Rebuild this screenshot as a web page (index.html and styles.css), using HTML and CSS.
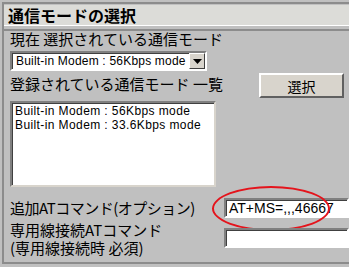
FILE: index.html
```html
<!DOCTYPE html>
<html lang="ja">
<head>
    <meta charset="UTF-8">
    <title>通信モードの選択</title>
    <link rel="stylesheet" href="styles.css">
</head>
<body>
    <div class="frame">
        <div class="title">通信モードの選択</div>
        <div class="content">
            <div class="label">現在 選択されている通信モード</div>
            <div class="select">
                <span class="select-text">Built-in Modem : 56Kbps mode</span>
                <span class="select-btn">
                    <svg width="9" height="5" viewBox="0 0 9 5"><path d="M0 0h9L4.5 5z" fill="#000"/></svg>
                </span>
            </div>
            <div class="list-head">
                <div class="label">登録されている通信モード 一覧</div>
                <button class="btn">選択</button>
            </div>
            <div class="listbox">
                <div class="item">Built-in Modem : 56Kbps mode</div>
                <div class="item">Built-in Modem : 33.6Kbps mode</div>
            </div>
            <div class="field">
                <div class="label narrow">追加ATコマンド(オプション)</div>
                <div class="input">AT+MS=,,,46667</div>
                <div class="mark"></div>
            </div>
            <div class="field field-two">
                <div class="label">
                    <div class="line">専用線接続ATコマンド</div>
                    <div class="line">(専用線接続時 必須)</div>
                </div>
                <div class="input"></div>
            </div>
        </div>
    </div>
</body>
</html>
```

FILE: styles.css
```css
body {
    margin: 0;
    background: #c0c0c0;
    font-family: "Noto Sans CJK JP", "DejaVu Sans", sans-serif;
    color: #000;
    overflow: hidden;
}

.frame {
    margin: 2px 0 0 2px;
    height: 258px;
    border-top: 2px solid #8c8c8c;
    border-left: 2px solid #8c8c8c;
    border-bottom: 2px solid #8c8c8c;
    position: relative;
}

.title {
    margin-top: 1px;
    height: 20px;
    padding-left: 4px;
    background: #dcdcd8;
    border-bottom: 1px solid #fff;
    font-size: 16px;
    font-weight: bold;
    line-height: 21px;
    box-shadow: 0 3px 0 #c0c0c0, 0 5px 0 #8c8c8c;
}

.content {
    padding: 4px 0 0 6px;
}

.label {
    font-size: 15px;
    line-height: 18px;
    white-space: nowrap;
}

.label.narrow {
    letter-spacing: -0.5px;
}

.select {
    margin-top: 3px;
    width: 193px;
    height: 16px;
    display: flex;
    align-items: center;
    background: #fff;
    border: 2px solid;
    border-color: #808080 #fff #fff #808080;
    box-shadow: inset 1px 1px 0 #404040;
}

.select-text {
    flex: 1;
    padding-left: 4px;
    font-family: "Liberation Sans", sans-serif;
    font-size: 12px;
    letter-spacing: 0.2px;
    white-space: nowrap;
}

.select-btn {
    width: 14px;
    height: 14px;
    display: flex;
    align-items: center;
    justify-content: center;
    background: #d8d4cc;
    border: 1px solid;
    border-color: #fff #404040 #404040 #fff;
}

.list-head {
    display: flex;
    justify-content: space-between;
    align-items: flex-start;
    margin-top: 2px;
}

.list-head .label {
    margin-top: 2px;
}

.btn {
    width: 85px;
    height: 25px;
    margin-right: 5px;
    background: #d8d4cc;
    border: 2px solid;
    border-color: #fff #606060 #606060 #fff;
    font-family: "Noto Sans CJK JP", sans-serif;
    font-size: 14px;
    line-height: 18px;
    padding: 0;
}

.listbox {
    margin-top: 3px;
    width: 202px;
    height: 81px;
    padding-top: 1px;
    background: #fff;
    border: 2px solid;
    border-color: #808080 #d8d4cc #d8d4cc #808080;
    box-shadow: inset 1px 1px 0 #404040;
}

.item {
    padding-left: 3px;
    font-family: "Liberation Sans", sans-serif;
    font-size: 12px;
    line-height: 14px;
    letter-spacing: 0.4px;
    white-space: nowrap;
}

.field {
    display: flex;
    align-items: flex-start;
    margin-top: 11px;
    position: relative;
}

.field .label {
    width: 214px;
    margin-top: 1px;
}

.line {
    height: 18px;
}

.input {
    flex: 1;
    height: 16px;
    padding-left: 3px;
    background: #fff;
    border: 2px solid;
    border-color: #808080 #fff #fff #808080;
    box-shadow: inset 1px 1px 0 #404040;
    font-family: "Liberation Sans", sans-serif;
    font-size: 14px;
    line-height: 17px;
}

.field-two {
    margin-top: 2px;
}

.field-two .input {
    margin-top: 8px;
}

.mark {
    position: absolute;
    left: 202px;
    top: -12px;
    width: 114px;
    height: 41px;
    border: 2px solid #e4141c;
    border-radius: 50%;
}
```
